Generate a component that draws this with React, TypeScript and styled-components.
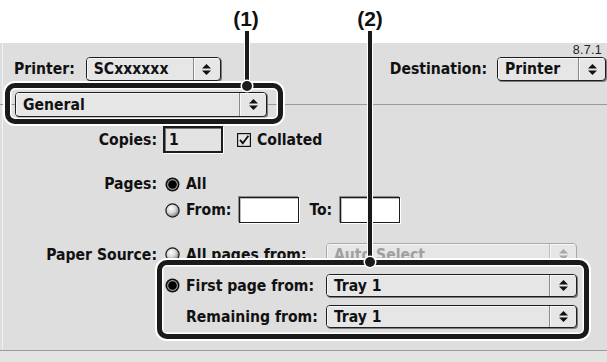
import React from 'react';
import styled, { createGlobalStyle } from 'styled-components';

const GlobalStyle = createGlobalStyle`
  html, body {
    margin: 0;
    padding: 0;
    background: #ffffff;
    overflow: hidden;
  }
`;

const uiFont = `"DejaVu Sans Condensed", "DejaVu Sans", sans-serif`;

// Page and panels
const Page = styled.div`
  position: relative;
  width: 607px;
  height: 362px;
  background: #ffffff;
  font-family: ${uiFont};
  font-stretch: condensed;
  font-weight: bold;
  font-size: 15.6px;
  color: #111;
  overflow: hidden;
`;

const TopStrip = styled.div`
  height: 43px;
  background: #ffffff;
`;

const Panel = styled.div`
  height: 307px;
  background: #dedede;
  box-shadow: inset 2px 0 0 #dedede, inset 3px 0 0 #f2f2f2;
  display: flex;
  flex-direction: column;
`;

const Footer = styled.div`
  height: 11px;
  background: #e3e3e3;
  border-top: 1px solid #9a9a9a;
`;

const Version = styled.div`
  padding: 1px 5px 0 0;
  height: 12px;
  line-height: 12px;
  text-align: right;
  font-family: "Liberation Sans", Arial, sans-serif;
  font-weight: normal;
  font-stretch: normal;
  font-size: 12.5px;
  letter-spacing: 0.3px;
  color: #222;
`;

const HeaderRow = styled.div`
  margin-top: 1px;
  height: 24px;
  padding: 0 1px 0 14px;
  display: flex;
  justify-content: space-between;
  align-items: center;
`;

const Field = styled.div<{ $gap: number }>`
  display: flex;
  align-items: center;
  gap: ${p => p.$gap}px;
`;

const DividerRow = styled.div`
  position: relative;
  margin-top: 11px;
  height: 25px;
  padding-left: 15px;
  display: flex;
  align-items: flex-start;
  &::before {
    content: '';
    position: absolute;
    left: 0;
    right: 0;
    top: 12px;
    border-top: 1px solid #9a9a9a;
  }
  & > * {
    position: relative;
  }
`;

// Form grid
const FormRow = styled.div<{ $top: number; $height: number }>`
  margin-top: ${p => p.$top}px;
  height: ${p => p.$height}px;
  display: grid;
  grid-template-columns: 157px 1fr;
  column-gap: 6px;
  align-items: center;
`;

const RowLabel = styled.div`
  text-align: right;
  white-space: nowrap;
`;

const RowContent = styled.div`
  display: flex;
  align-items: center;
  height: 100%;
`;

const Option = styled.div<{ $width?: number; $indent?: number }>`
  display: flex;
  align-items: center;
  gap: 6px;
  margin-left: ${p => (p.$indent ?? 2)}px;
  ${p => (p.$width ? `width: ${p.$width}px;` : '')}
  flex-shrink: 0;
  white-space: nowrap;
  & > svg {
    flex-shrink: 0;
    display: block;
  }
`;

const Text = styled.span<{ $ml?: number; $mr?: number }>`
  margin-left: ${p => p.$ml ?? 0}px;
  margin-right: ${p => p.$mr ?? 0}px;
  white-space: nowrap;
`;

const TextBox = styled.div<{ $width: number; $focused?: boolean; $ml?: number }>`
  box-sizing: border-box;
  flex-shrink: 0;
  width: ${p => p.$width}px;
  height: 100%;
  margin-left: ${p => p.$ml ?? 0}px;
  padding-left: 4px;
  display: flex;
  align-items: center;
  background: ${p => (p.$focused ? '#e3e3e3' : '#ffffff')};
  border: ${p => (p.$focused ? '2px solid #1c1c1c' : '1px solid #1c1c1c')};
  box-shadow: ${p =>
    p.$focused
      ? 'inset 1px 1px 0 #777, 1px 1px 0 #ffffff'
      : 'inset 1px 1px 0 #bbb, 1px 1px 0 #ffffff, -1px -1px 0 #8c8c8c'};
`;

// Pop-up menu
const PopupBox = styled.div<{ $width: number; $height: number; $disabled?: boolean }>`
  box-sizing: border-box;
  flex-shrink: 0;
  width: ${p => p.$width}px;
  height: ${p => p.$height}px;
  display: flex;
  background: #e6e6e6;
  border: 1px solid ${p => (p.$disabled ? '#a8a8a8' : '#1e1e1e')};
  border-radius: 4px;
  box-shadow: ${p => (p.$disabled ? 'none' : '1px 1px 0 #7c7c7c')};
  color: ${p => (p.$disabled ? '#a0a0a0' : '#111')};
  overflow: hidden;
`;

const PopupText = styled.div`
  flex: 1;
  display: flex;
  align-items: center;
  padding-left: 7px;
  white-space: nowrap;
  box-shadow: inset 1px 1px 0 #f6f6f6;
`;

const PopupArrows = styled.div<{ $disabled?: boolean }>`
  width: 26px;
  display: flex;
  align-items: center;
  justify-content: center;
  border-left: 1px solid ${p => (p.$disabled ? '#bdbdbd' : '#8a8a8a')};
  box-shadow: inset 1px 1px 0 #f8f8f8;
`;

// Annotation overlays
const CalloutNumber = styled.div<{ $x: number }>`
  position: absolute;
  top: 7px;
  left: ${p => p.$x}px;
  transform: translateX(-50%);
  font-family: "Liberation Sans", Arial, sans-serif;
  font-stretch: normal;
  font-weight: bold;
  font-size: 21px;
  line-height: 24px;
  color: #111;
`;

const Leader = styled.div<{ $x: number; $top: number; $bottom: number }>`
  position: absolute;
  left: ${p => p.$x - 2}px;
  top: ${p => p.$top}px;
  width: 4px;
  height: ${p => p.$bottom - p.$top}px;
  background: #1a1a1a;
  box-shadow: 0 0 0 1px #ffffff;
`;

const Dot = styled.div<{ $x: number; $y: number }>`
  position: absolute;
  left: ${p => p.$x - 5}px;
  top: ${p => p.$y - 5}px;
  width: 10px;
  height: 10px;
  border-radius: 50%;
  background: #1a1a1a;
  box-shadow: 0 0 0 1.5px #ffffff;
`;

const CalloutBox = styled.div<{ $x: number; $y: number; $w: number; $h: number }>`
  position: absolute;
  box-sizing: border-box;
  left: ${p => p.$x}px;
  top: ${p => p.$y}px;
  width: ${p => p.$w}px;
  height: ${p => p.$h}px;
  border: 5px solid #1a1a1a;
  border-radius: 10px;
  box-shadow: 0 0 0 2px #ffffff, inset 0 0 0 1.5px #ffffff;
`;

const Arrows: React.FC<{ color: string }> = ({ color }) => (
  <svg width="9" height="13" viewBox="0 0 9 13">
    <polygon points="0,5.5 4.5,1 9,5.5" fill={color} />
    <polygon points="0,7.5 9,7.5 4.5,12" fill={color} />
  </svg>
);

const Popup: React.FC<{ width: number; height: number; disabled?: boolean; children: React.ReactNode }> = ({
  width,
  height,
  disabled,
  children,
}) => (
  <PopupBox $width={width} $height={height} $disabled={disabled}>
    <PopupText>{children}</PopupText>
    <PopupArrows $disabled={disabled}>
      <Arrows color={disabled ? '#a8a8a8' : '#111'} />
    </PopupArrows>
  </PopupBox>
);

const Radio: React.FC<{ on?: boolean }> = ({ on }) => {
  const id = React.useId();
  return (
    <svg width="15" height="15" viewBox="0 0 15 15">
      <defs>
        <radialGradient id={id} cx="0.4" cy="0.35" r="0.7">
          <stop offset="0" stopColor="#ffffff" />
          <stop offset="0.5" stopColor="#d6d6d6" />
          <stop offset="1" stopColor="#6e6e6e" />
        </radialGradient>
      </defs>
      {on ? (
        <>
          <circle cx="7.5" cy="7.5" r="7" fill="#111" />
          <circle cx="7.5" cy="7.5" r="5.4" fill="#9c9c9c" />
          <circle cx="7.5" cy="7.5" r="4.3" fill="#000" />
        </>
      ) : (
        <circle cx="7.5" cy="7.5" r="6.6" fill={`url(#${id})`} stroke="#1a1a1a" strokeWidth="1.2" />
      )}
    </svg>
  );
};

const Checkbox: React.FC = () => (
  <svg width="14" height="14" viewBox="0 0 14 14">
    <rect x="0.6" y="0.6" width="12.8" height="12.8" fill="#e6e6e6" stroke="#111" strokeWidth="1.2" />
    <path d="M3 6.8 L5.8 10.2 L11.4 2.8" fill="none" stroke="#111" strokeWidth="1.9" />
  </svg>
);

export default function App() {
  return (
    <>
      <GlobalStyle />
      <Page>
        <TopStrip />
        <Panel>
          <Version>8.7.1</Version>
          <HeaderRow>
            <Field $gap={11}>
              <span>Printer:</span>
              <Popup width={135} height={24}>SCxxxxxx</Popup>
            </Field>
            <Field $gap={10}>
              <span>Destination:</span>
              <Popup width={109} height={24}>Printer</Popup>
            </Field>
          </HeaderRow>

          <DividerRow>
            <Popup width={252} height={25}>General</Popup>
          </DividerRow>

          <FormRow $top={9} $height={27}>
            <RowLabel>Copies:</RowLabel>
            <RowContent>
              <TextBox $width={60} $focused>1</TextBox>
              <Option $indent={14}>
                <Checkbox />
                <Text>Collated</Text>
              </Option>
            </RowContent>
          </FormRow>

          <FormRow $top={21} $height={20}>
            <RowLabel>Pages:</RowLabel>
            <RowContent>
              <Option>
                <Radio on />
                <Text>All</Text>
              </Option>
            </RowContent>
          </FormRow>

          <FormRow $top={3} $height={26}>
            <RowLabel />
            <RowContent>
              <Option>
                <Radio />
                <Text>From:</Text>
              </Option>
              <TextBox $width={60} $ml={8} />
              <Text $ml={10} $mr={8}>To:</Text>
              <TextBox $width={60} />
            </RowContent>
          </FormRow>

          <FormRow $top={20} $height={23}>
            <RowLabel>Paper Source:</RowLabel>
            <RowContent>
              <Option $width={161}>
                <Radio />
                <Text>All pages from:</Text>
              </Option>
              <Popup width={251} height={23} disabled>Auto Select</Popup>
            </RowContent>
          </FormRow>

          <FormRow $top={8} $height={23}>
            <RowLabel />
            <RowContent>
              <Option $width={161}>
                <Radio on />
                <Text>First page from:</Text>
              </Option>
              <Popup width={251} height={23}>Tray 1</Popup>
            </RowContent>
          </FormRow>

          <FormRow $top={8} $height={23}>
            <RowLabel />
            <RowContent>
              <Option $width={140} $indent={23}>
                <Text>Remaining from:</Text>
              </Option>
              <Popup width={251} height={23}>Tray 1</Popup>
            </RowContent>
          </FormRow>
        </Panel>
        <Footer />

        {/* callout annotations */}
        <CalloutNumber $x={246}>(1)</CalloutNumber>
        <CalloutNumber $x={370}>(2)</CalloutNumber>
        <Leader $x={247} $top={31} $bottom={85} />
        <Leader $x={370} $top={31} $bottom={262} />
        <CalloutBox $x={5} $y={83} $w={278} $h={41} />
        <CalloutBox $x={157} $y={260} $w={432} $h={79} />
        <Dot $x={247} $y={86} />
        <Dot $x={370} $y={262} />
      </Page>
    </>
  );
}
